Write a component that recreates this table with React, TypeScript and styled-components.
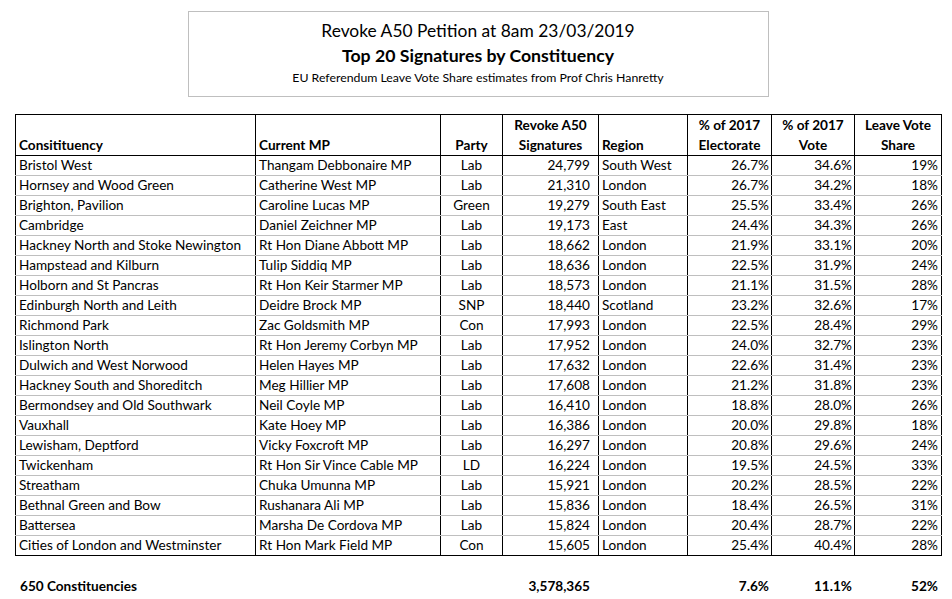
import React from "react";
import styled, { createGlobalStyle } from "styled-components";

const Global = createGlobalStyle`
  html, body { margin: 0; padding: 0; background: #fff; }
  body { font-family: Lato, "Open Sans", "Liberation Sans", sans-serif; color: #000; }
`;

const Page = styled.div`
  width: 926px;
  padding: 11px 0 0 15px;
  display: flex;
  flex-direction: column;
  align-items: center;
`;

const TitleBox = styled.div`
  box-sizing: border-box;
  width: 581px;
  height: 86px;
  padding-top: 6px;
  border: 1px solid #bfbfbf;
  display: flex;
  flex-direction: column;
  align-items: center;
`;

const TitleLine = styled.div<{ $size: number; $bold?: boolean; $h: number }>`
  font-size: ${(p) => p.$size}px;
  font-weight: ${(p) => (p.$bold ? 700 : 400)};
  line-height: ${(p) => p.$h}px;
  white-space: nowrap;
`;

const Table = styled.table`
  margin-top: 17px;
  width: 926px;
  border-collapse: collapse;
  table-layout: fixed;
  font-size: 13.6px;
  align-self: flex-start;
`;

const Th = styled.th<{ $align: "left" | "center" | "right" }>`
  height: 39px;
  border: 1px solid #000;
  vertical-align: bottom;
  text-align: ${(p) => p.$align};
  font-weight: 700;
  line-height: 20px;
  padding: 0 3px 0 3px;
  white-space: nowrap;
  overflow: hidden;
`;

const Tr = styled.tr`
  &:last-child td { border-bottom: 1px solid #000; }
`;

const Td = styled.td<{ $align: "left" | "center" | "right"; $pr?: number }>`
  height: 19px;
  padding: 0 ${(p) => p.$pr ?? 3}px 0 3px;
  border-left: 1px solid #000;
  border-right: 1px solid #000;
  border-bottom: 1px solid #bfbfbf;
  text-align: ${(p) => p.$align};
  line-height: 19px;
  white-space: nowrap;
  overflow: hidden;
`;

const Footer = styled.table`
  margin-top: 20px;
  width: 926px;
  border-collapse: collapse;
  table-layout: fixed;
  font-size: 13.6px;
  font-weight: 700;
  align-self: flex-start;
`;

const Ft = styled.td<{ $align: "left" | "center" | "right"; $pr?: number }>`
  height: 20px;
  padding: 0 ${(p) => p.$pr ?? 3}px 0 4px;
  text-align: ${(p) => p.$align};
  white-space: nowrap;
  border-left: 1px solid transparent;
  border-right: 1px solid transparent;
`;

const widths = [240, 185, 62, 96, 89, 84, 83, 87];

type Row = [string, string, string, string, string, string, string, string];

const rows: Row[] = [
  ["Bristol West", "Thangam Debbonaire MP", "Lab", "24,799", "South West", "26.7%", "34.6%", "19%"],
  ["Hornsey and Wood Green", "Catherine West MP", "Lab", "21,310", "London", "26.7%", "34.2%", "18%"],
  ["Brighton, Pavilion", "Caroline Lucas MP", "Green", "19,279", "South East", "25.5%", "33.4%", "26%"],
  ["Cambridge", "Daniel Zeichner MP", "Lab", "19,173", "East", "24.4%", "34.3%", "26%"],
  ["Hackney North and Stoke Newington", "Rt Hon Diane Abbott MP", "Lab", "18,662", "London", "21.9%", "33.1%", "20%"],
  ["Hampstead and Kilburn", "Tulip Siddiq MP", "Lab", "18,636", "London", "22.5%", "31.9%", "24%"],
  ["Holborn and St Pancras", "Rt Hon Keir Starmer MP", "Lab", "18,573", "London", "21.1%", "31.5%", "28%"],
  ["Edinburgh North and Leith", "Deidre Brock MP", "SNP", "18,440", "Scotland", "23.2%", "32.6%", "17%"],
  ["Richmond Park", "Zac Goldsmith MP", "Con", "17,993", "London", "22.5%", "28.4%", "29%"],
  ["Islington North", "Rt Hon Jeremy Corbyn MP", "Lab", "17,952", "London", "24.0%", "32.7%", "23%"],
  ["Dulwich and West Norwood", "Helen Hayes MP", "Lab", "17,632", "London", "22.6%", "31.4%", "23%"],
  ["Hackney South and Shoreditch", "Meg Hillier MP", "Lab", "17,608", "London", "21.2%", "31.8%", "23%"],
  ["Bermondsey and Old Southwark", "Neil Coyle MP", "Lab", "16,410", "London", "18.8%", "28.0%", "26%"],
  ["Vauxhall", "Kate Hoey MP", "Lab", "16,386", "London", "20.0%", "29.8%", "18%"],
  ["Lewisham, Deptford", "Vicky Foxcroft MP", "Lab", "16,297", "London", "20.8%", "29.6%", "24%"],
  ["Twickenham", "Rt Hon Sir Vince Cable MP", "LD", "16,224", "London", "19.5%", "24.5%", "33%"],
  ["Streatham", "Chuka Umunna MP", "Lab", "15,921", "London", "20.2%", "28.5%", "22%"],
  ["Bethnal Green and Bow", "Rushanara Ali MP", "Lab", "15,836", "London", "18.4%", "26.5%", "31%"],
  ["Battersea", "Marsha De Cordova MP", "Lab", "15,824", "London", "20.4%", "28.7%", "22%"],
  ["Cities of London and Westminster", "Rt Hon Mark Field MP", "Con", "15,605", "London", "25.4%", "40.4%", "28%"],
];

const aligns: ("left" | "center" | "right")[] = ["left", "left", "center", "right", "left", "right", "right", "right"];
const pads = [3, 3, 3, 8, 3, 2, 2, 3];

const headers: { text: React.ReactNode; align: "left" | "center" | "right" }[] = [
  { text: "Consitituency", align: "left" },
  { text: "Current MP", align: "left" },
  { text: "Party", align: "center" },
  { text: <>Revoke A50<br />Signatures</>, align: "center" },
  { text: "Region", align: "left" },
  { text: <>% of 2017<br />Electorate</>, align: "center" },
  { text: <>% of 2017<br />Vote</>, align: "center" },
  { text: <>Leave Vote<br />Share</>, align: "center" },
];

const footer: Row = ["650 Constituencies", "", "", "3,578,365", "", "7.6%", "11.1%", "52%"];

const Cols = () => (
  <colgroup>
    {widths.map((w, i) => (
      <col key={i} style={{ width: w }} />
    ))}
  </colgroup>
);

export default function App() {
  return (
    <>
      <Global />
      <Page>
        <TitleBox>
          <TitleLine $size={17.4} $h={25}>Revoke A50 Petition at 8am 23/03/2019</TitleLine>
          <TitleLine $size={17.7} $bold $h={26}>Top 20 Signatures by Constituency</TitleLine>
          <TitleLine $size={12.3} $h={18}>EU Referendum Leave Vote Share estimates from Prof Chris Hanretty</TitleLine>
        </TitleBox>
        <Table>
          <Cols />
          <thead>
            <tr>
              {headers.map((h, i) => (
                <Th key={i} $align={h.align}>{h.text}</Th>
              ))}
            </tr>
          </thead>
          <tbody>
            {rows.map((r, ri) => (
              <Tr key={ri}>
                {r.map((c, ci) => (
                  <Td key={ci} $align={aligns[ci]} $pr={pads[ci]}>{c}</Td>
                ))}
              </Tr>
            ))}
          </tbody>
        </Table>
        <Footer>
          <Cols />
          <tbody>
            <tr>
              {footer.map((c, ci) => (
                <Ft key={ci} $align={aligns[ci]} $pr={pads[ci]}>{c}</Ft>
              ))}
            </tr>
          </tbody>
        </Footer>
      </Page>
    </>
  );
}
